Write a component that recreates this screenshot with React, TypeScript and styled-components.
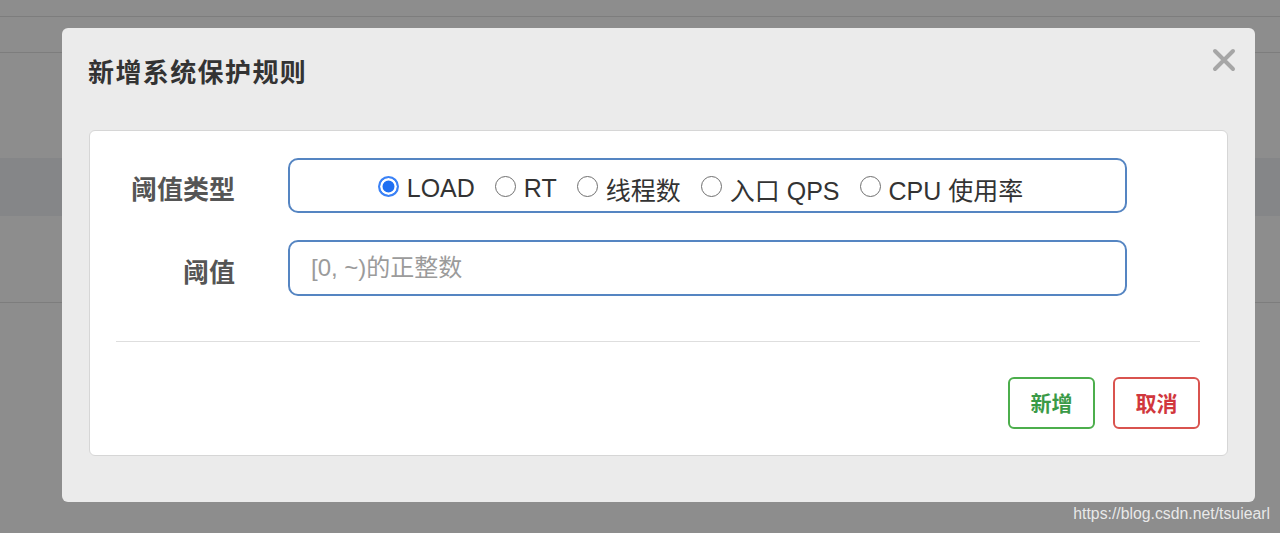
import styled, { createGlobalStyle } from "styled-components";

const GlobalStyle = createGlobalStyle`
  html, body {
    margin: 0;
    padding: 0;
  }
  body {
    font-family: "Liberation Sans", "Noto Sans CJK SC", sans-serif;
    background: #8d8d8d;
  }
`

const Page = styled.div`
  position: relative;
  width: 1280px;
  height: 533px;
  overflow: hidden;
  background: #8d8d8d;
`

const BackRow = styled.div<{ h: number; line?: boolean; shade?: boolean }>`
  height: ${props => props.h}px;
  background: ${props => props.shade ? '#858688' : 'transparent'};
  border-bottom: ${props => props.line ? '1px solid #7d7d7d' : 'none'};
`

const Modal = styled.div`
  position: absolute;
  left: 62px;
  top: 28px;
  width: 1193px;
  height: 474px;
  box-sizing: border-box;
  padding: 30px 27px 0 27px;
  background: #ebebeb;
  border-radius: 6px;
`

const Title = styled.h3`
  margin: 0 0 42px -1px;
  font-size: 26px;
  line-height: 30px;
  font-weight: bold;
  color: #333;
  letter-spacing: 1.4px;
`

const CloseButton = styled.button`
  position: absolute;
  top: 20px;
  right: 19px;
  width: 24px;
  height: 24px;
  padding: 0;
  border: none;
  background: none;
  cursor: pointer;
`

const Card = styled.div`
  box-sizing: border-box;
  height: 326px;
  padding: 27px 27px 0 26px;
  background: #fff;
  border: 1px solid #d6d6d6;
  border-radius: 6px;
`

const FormRow = styled.div<{ h: number }>`
  display: grid;
  grid-template-columns: 119px 839px;
  column-gap: 53px;
  align-items: center;
  height: ${props => props.h}px;
  margin-bottom: 27px;
  &:last-of-type {
    margin-bottom: 0;
  }
`

const Label = styled.label`
  text-align: right;
  font-size: 26px;
  font-weight: bold;
  color: #555;
  padding-top: 4px;
`

const FieldBox = styled.div`
  box-sizing: border-box;
  height: 100%;
  border: 2px solid #5585c2;
  border-radius: 10px;
  background: #fff;
`

const RadioGroup = styled(FieldBox)`
  display: flex;
  align-items: center;
  justify-content: center;
  gap: 20px;
  padding: 6px 14px 0 0;
`

const RadioItem = styled.label`
  display: flex;
  align-items: center;
  gap: 8px;
  font-size: 25px;
  color: #333;
  cursor: pointer;
`

const RadioCircle = styled.span<{ checked?: boolean }>`
  box-sizing: border-box;
  width: 21px;
  height: 21px;
  border-radius: 50%;
  border: ${props => props.checked ? '2px solid #3b82f6' : '1.5px solid #6f6f6f'};
  background: ${props => props.checked ? '#1f6ff2' : '#fff'};
  box-shadow: ${props => props.checked ? 'inset 0 0 0 2.5px #fff' : 'none'};
  margin-top: -4px;
`

const Input = styled.input`
  box-sizing: border-box;
  width: 100%;
  height: 100%;
  padding: 0 0 0 21px;
  border: 2px solid #5585c2;
  border-radius: 10px;
  outline: none;
  font-family: "Liberation Sans", "Noto Sans CJK SC", sans-serif;
  font-size: 24px;
  color: #333;
  &::placeholder {
    color: #9b9b9b;
  }
`

const Divider = styled.hr`
  margin: 45px 0 0 0;
  border: none;
  border-top: 1px solid #dedede;
`

const Footer = styled.div`
  display: flex;
  justify-content: flex-end;
  gap: 18px;
  margin-top: 35px;
`

const ActionButton = styled.button<{ tone: 'success' | 'danger' }>`
  box-sizing: border-box;
  width: 87px;
  height: 52px;
  padding: 0 0 3px 0;
  background: #fff;
  border: 2px solid ${props => props.tone === 'success' ? '#4cae4c' : '#d9534f'};
  border-radius: 6px;
  color: ${props => props.tone === 'success' ? '#3a9a47' : '#d1373d'};
  font-family: "Liberation Sans", "Noto Sans CJK SC", sans-serif;
  font-size: 21px;
  font-weight: bold;
  cursor: pointer;
`

const Watermark = styled.div`
  position: absolute;
  right: 10px;
  bottom: 10px;
  font-size: 15.8px;
  color: rgba(255, 255, 255, 0.82);
`

const options = ['LOAD', 'RT', '线程数', '入口 QPS', 'CPU 使用率']

export default function App() {
  return (
    <Page>
      <GlobalStyle />
      <BackRow h={16} line />
      <BackRow h={35} line />
      <BackRow h={105} />
      <BackRow h={58} shade />
      <BackRow h={86} line />

      <Modal>
        <Title>新增系统保护规则</Title>
        <CloseButton aria-label="关闭">
          <svg width="24" height="24" viewBox="0 0 24 24">
            <path d="M3 3 L21 21 M21 3 L3 21" stroke="#a6a6a6" strokeWidth="4" strokeLinecap="round" />
          </svg>
        </CloseButton>
        <Card>
          <FormRow h={55}>
            <Label>阈值类型</Label>
            <RadioGroup>
              {options.map((opt, i) => (
                <RadioItem key={opt}>
                  <RadioCircle checked={i === 0} />
                  {opt}
                </RadioItem>
              ))}
            </RadioGroup>
          </FormRow>
          <FormRow h={56}>
            <Label>阈值</Label>
            <Input placeholder="[0, ~)的正整数" />
          </FormRow>
          <Divider />
          <Footer>
            <ActionButton tone="success">新增</ActionButton>
            <ActionButton tone="danger">取消</ActionButton>
          </Footer>
        </Card>
      </Modal>

      <Watermark>https://blog.csdn.net/tsuiearl</Watermark>
    </Page>
  )
}
